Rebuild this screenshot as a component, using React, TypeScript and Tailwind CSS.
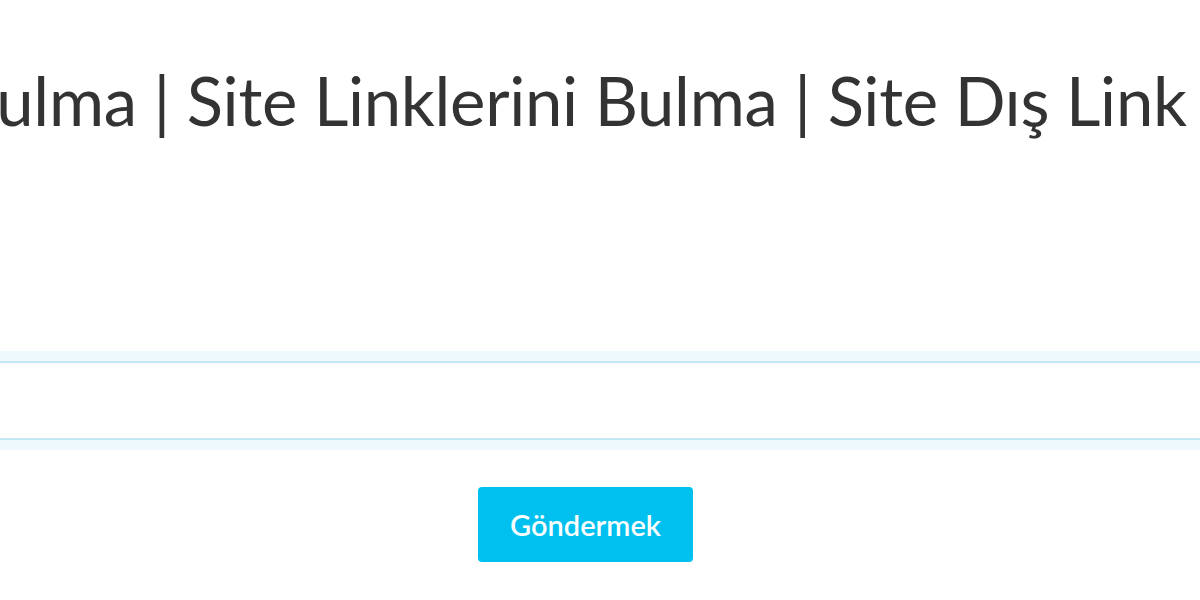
export default function App() {
  return (
    <div className="w-[1200px] h-[600px] bg-white overflow-hidden" style={{ fontFamily: "Lato, 'Noto Sans', sans-serif" }}>
      <div className="pt-[55px] h-[351px] overflow-hidden">
        <h1 className="whitespace-nowrap text-[67px] leading-[90px] font-normal tracking-[-0.3px] text-[#333333] ml-[-46px]">
          Bulma | Site Linklerini Bulma | Site Dış Link Bulma
        </h1>
      </div>
      <div className="h-[99px] bg-[#eef9fd] pt-[10px] pb-[10px]">
        <input type="text" className="block w-full h-[79px] bg-white border-y-2 border-[#c3e7f3] outline-none" />
      </div>
      <div className="flex pt-[37px] pl-[478px]">
        <button className="w-[215px] h-[75px] rounded-[4px] bg-[#00c0ef] text-white text-[29px] font-semibold">
          Göndermek
        </button>
      </div>
    </div>
  );
}
